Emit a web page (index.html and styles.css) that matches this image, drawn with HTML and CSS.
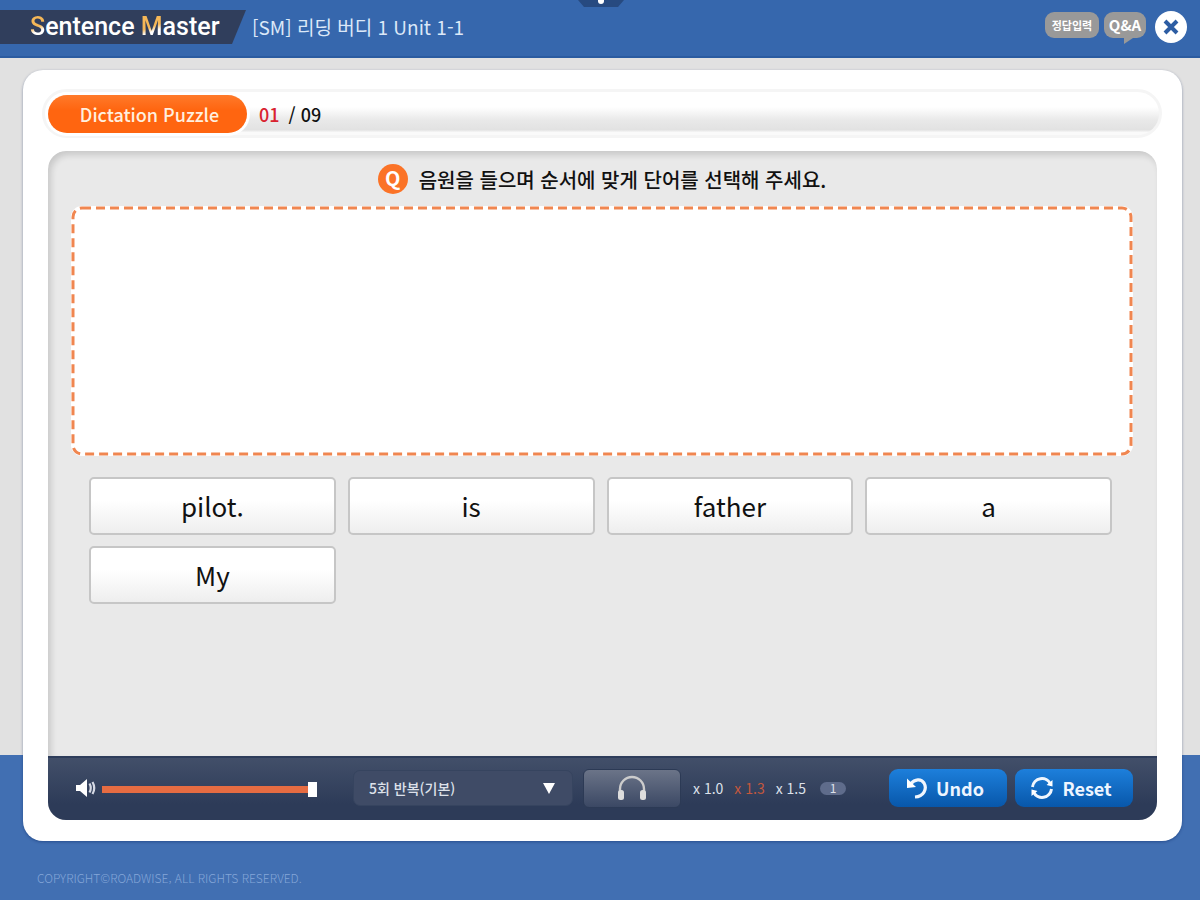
FILE: index.html
```html
<!DOCTYPE html>
<html lang="ko">
<head>
    <meta charset="UTF-8">
    <meta name="viewport" content="width=device-width, initial-scale=1.0">
    <title>Sentence Master</title>
    <link rel="stylesheet" href="styles.css">
</head>
<body>
    <header class="header">
        <h1 class="brand"><span>S</span>entence <span>M</span>aster</h1>
        <p class="unit">[SM] 리딩 버디 1 Unit 1-1</p>
        <button class="pulldown" aria-label="Menu"><i></i></button>
        <div class="header-buttons">
            <button class="tag">정답입력</button>
            <button class="tag qna">Q&amp;A</button>
            <button class="close" aria-label="Close">
                <svg width="16" height="16" viewBox="0 0 16 16"><path d="M2 2l12 12M14 2L2 14" stroke="#2d5da3" stroke-width="4"/></svg>
            </button>
        </div>
    </header>

    <main class="card">
        <div class="title-bar">
            <h2 class="title">Dictation Puzzle</h2>
            <p class="count"><span>01</span> / 09</p>
        </div>

        <section class="panel">
            <div class="puzzle">
                <p class="question"><span class="q-mark">Q</span>음원을 들으며 순서에 맞게 단어를 선택해 주세요.</p>
                <div class="answer">
                    <svg class="answer-line"><rect x="2" y="2" rx="9"/></svg>
                </div>
                <div class="words">
                    <button class="word">pilot.</button>
                    <button class="word">is</button>
                    <button class="word">father</button>
                    <button class="word">a</button>
                    <button class="word">My</button>
                </div>
            </div>

            <div class="toolbar">
                <label class="volume">
                    <svg width="20" height="18" viewBox="0 0 20 18"><path d="M0 6h4l7-6v18l-7-6H0z" fill="#fff"/><path d="M13.500 4.500q2.500 4.500 0 9M16.500 3q3.500 6 0 12" fill="none" stroke="#d5d9e4" stroke-width="2.200"/></svg>
                    <input type="range" min="0" max="100" value="100" aria-label="Volume">
                </label>
                <div class="repeat">
                    <select aria-label="반복">
                        <option>5회 반복(기본)</option>
                    </select>
                    <svg class="arrow" width="12" height="11" viewBox="0 0 12 11"><path d="M0 0h12L6 11z" fill="#fff"/></svg>
                </div>
                <button class="listen" aria-label="Listen">
                    <svg width="30" height="26" viewBox="0 0 30 26"><path d="M3 19v-5a12 12 0 0 1 24 0v5" fill="none" stroke="#ccc" stroke-width="2.400"/><rect x="1" y="15" width="6" height="10" rx="2.500" fill="#ddd"/><rect x="23" y="15" width="6" height="10" rx="2.500" fill="#ddd"/></svg>
                </button>
                <div class="speeds">
                    <button>x 1.0</button>
                    <button class="on">x 1.3</button>
                    <button>x 1.5</button>
                    <button class="times">1</button>
                </div>
                <div class="actions">
                    <button class="action">
                        <svg width="22" height="22" viewBox="0 0 22 22"><path d="M4.500 7C9 2 15 1.500 18 6C21.500 12 17.500 19.500 9 20" fill="none" stroke="#f0f6fd" stroke-width="3.200"/><path d="M1 1.500V11l9-1z" fill="#fff"/></svg>
                        Undo
                    </button>
                    <button class="action">
                        <svg width="24" height="24" viewBox="0 0 24 24"><path d="M2.500 11a9.500 9.500 0 0 1 18-3M21.500 13a9.500 9.500 0 0 1-18 3" fill="none" stroke="#f0f6fd" stroke-width="3"/><path d="M22.500 4v6.500l-6-1.500zM1.500 20v-6.500l6 1.500z" fill="#fff"/></svg>
                        Reset
                    </button>
                </div>
            </div>
        </section>
    </main>

    <footer class="footer">COPYRIGHT©ROADWISE, ALL RIGHTS RESERVED.</footer>
</body>
</html>
```
FILE: styles.css
```css
* {
    box-sizing: border-box;
}
body {
    display: flex;
    flex-direction: column;
    min-height: 100vh;
    margin: 0;
    font-family: "Noto Sans CJK KR", sans-serif;
    color: #111;
    background: linear-gradient(to top, #416fb2 145px, #e1e1e1 145px);
}
h1, h2, p {
    margin: 0;
}
button, select {
    border: none;
    padding: 0;
    font-family: inherit;
    color: inherit;
    cursor: pointer;
}

/* header */
.header {
    position: relative;
    display: flex;
    align-items: center;
    height: 58px;
    padding-bottom: 2px;
    background: #3667ad;
    border-bottom: 2px solid #2b5ba0;
}
.brand {
    width: 246px;
    height: 34px;
    padding-left: 30px;
    font-family: Roboto, sans-serif;
    font-size: 25px;
    font-weight: 500;
    line-height: 34px;
    color: #fff;
    background: #303e5c;
    clip-path: polygon(0 0, 100% 0, 232px 100%, 0 100%);
}
.brand span {
    background: linear-gradient(160deg, #f5b757 50%, #fff 65%);
    -webkit-background-clip: text;
    background-clip: text;
    color: transparent;
}
.unit {
    padding-left: 6px;
    font-size: 19px;
    line-height: 28px;
    color: #dce8f8;
}
.pulldown {
    position: absolute;
    top: 0;
    left: 50%;
    width: 46px;
    height: 7px;
    margin-left: -22px;
    background: #274a80;
    clip-path: polygon(0 0, 100% 0, 40px 100%, 6px 100%);
}
.pulldown i {
    display: block;
    width: 6px;
    height: 4px;
    margin: -3px auto 0;
    border-radius: 0 0 3px 3px;
    background: #fff;
}
.header-buttons {
    display: flex;
    gap: 5px;
    margin-left: auto;
    padding-right: 13px;
}
.tag {
    position: relative;
    width: 54px;
    height: 26px;
    margin-top: 1px;
    border-radius: 9px;
    background: #999;
    color: #fff;
    font-size: 11px;
    font-weight: 700;
    line-height: 24px;
}
.qna {
    width: 42px;
    font-size: 15px;
}
.qna::after {
    content: "";
    position: absolute;
    top: 24px;
    right: 10px;
    width: 12px;
    height: 8px;
    background: #999;
    clip-path: polygon(0 0, 100% 0, 0 100%);
}
.close {
    display: flex;
    align-items: center;
    justify-content: center;
    width: 32px;
    height: 32px;
    margin-left: 4px;
    border-radius: 50%;
    background: #fff;
}

/* card */
.card {
    display: flex;
    flex: 1;
    flex-direction: column;
    margin: 12px 18px 0 23px;
    padding: 19px 20px 21px 19px;
    border-radius: 20px;
    background: #fff;
    box-shadow: 0 1px 3px rgba(0, 30, 90, 0.4);
}
.title-bar {
    display: flex;
    align-items: center;
    height: 49px;
    padding-left: 3px;
    border: 3px solid #f5f5f5;
    border-radius: 25px;
    background: linear-gradient(#fff 35%, #e9e9e9 65%, #e2e2e2 88%, #fafafa 94%);
}
.title {
    width: 199px;
    height: 38px;
    padding-left: 4px;
    border-radius: 19px;
    background: linear-gradient(#ff7a2a, #ff6510 40%);
    box-shadow: 0 0 0 3px #fff;
    color: #ffefdf;
    font-size: 18px;
    font-weight: 500;
    line-height: 38px;
    text-align: center;
}
.count {
    padding-left: 12px;
    font-size: 18px;
    font-weight: 500;
}
.count span {
    margin-right: 4px;
    color: #d9222f;
}

/* puzzle */
.panel {
    display: flex;
    flex: 1;
    flex-direction: column;
    margin: 13px 5px 0 6px;
    border-radius: 18px;
    overflow: hidden;
    background: #e9e9e9;
}
.puzzle {
    flex: 1;
    padding: 13px 24px 20px 23px;
    border-radius: 18px 18px 0 0;
    box-shadow: inset 3px 4px 6px rgba(0, 0, 0, 0.14);
}
.question {
    display: flex;
    align-items: center;
    justify-content: center;
    gap: 11px;
    height: 30px;
    margin-bottom: 12px;
    font-size: 20px;
    font-weight: 500;
}
.q-mark {
    width: 30px;
    height: 30px;
    border-radius: 50%;
    background: #fb7327;
    color: #fff;
    font-weight: 700;
    line-height: 28px;
    text-align: center;
}
.answer {
    position: relative;
    height: 250px;
    border-radius: 11px;
    background: #fff;
}
.answer-line {
    position: absolute;
    top: 0;
    left: 0;
    width: 100%;
    height: 100%;
}
.answer-line rect {
    width: calc(100% - 4px);
    height: calc(100% - 4px);
    fill: none;
    stroke: #f08650;
    stroke-width: 3;
    stroke-dasharray: 9 5;
}
.words {
    display: grid;
    grid-template-columns: repeat(4, 1fr);
    gap: 11px 12px;
    margin: 21px 21px 0 18px;
}
.word {
    height: 58px;
    border: 2px solid #c6c6c6;
    border-radius: 5px;
    background: linear-gradient(#fff 40%, #eee);
    font-size: 26px;
    line-height: 52px;
}

/* toolbar */
.toolbar {
    display: flex;
    align-items: center;
    height: 64px;
    padding: 0 24px 2px 28px;
    border-top: 2px solid #2e3d5b;
    background: linear-gradient(#424f69, #2d3b58 75%);
    color: #dde1ea;
}
.volume {
    display: flex;
    align-items: center;
    gap: 6px;
}
.volume input {
    width: 215px;
    height: 16px;
    margin: 2px 0 0;
    appearance: none;
    background: linear-gradient(#e66c42, #e66c42) center / 100% 7px no-repeat;
}
.volume input::-webkit-slider-thumb {
    appearance: none;
    width: 9px;
    height: 15px;
    background: #fff;
}
.repeat {
    position: relative;
    margin-left: 36px;
}
.repeat select {
    width: 220px;
    height: 36px;
    padding-left: 15px;
    appearance: none;
    border: 1px solid #36445f;
    border-radius: 7px;
    background: #3f4b66;
    font-size: 14px;
    font-weight: 500;
}
.arrow {
    position: absolute;
    top: 13px;
    right: 18px;
    pointer-events: none;
}
.listen {
    display: flex;
    align-items: center;
    justify-content: center;
    width: 98px;
    height: 39px;
    margin-left: 10px;
    border: 1px solid #2c3a55;
    border-radius: 6px;
    background: linear-gradient(#6b7488, #3b4864);
}
.speeds {
    display: flex;
    align-items: center;
    gap: 11px;
    margin-left: 12px;
}
.speeds button {
    background: none;
    font-size: 14px;
}
.speeds .on {
    color: #c4583d;
}
.speeds .times {
    width: 26px;
    height: 13px;
    margin-left: 3px;
    border-radius: 7px;
    background: #5f6c8b;
    font-size: 12px;
    line-height: 12px;
}
.actions {
    display: flex;
    gap: 8px;
    margin-left: auto;
}
.action {
    display: flex;
    align-items: center;
    justify-content: center;
    gap: 8px;
    width: 118px;
    height: 38px;
    padding-right: 6px;
    border-radius: 9px;
    background: linear-gradient(#1d7fdb, #0857aa);
    color: #eef5ff;
    font-size: 18px;
    font-weight: 700;
    line-height: 32px;
}

.footer {
    height: 59px;
    padding: 27px 37px 0;
    color: #84a6d8;
    font-size: 12px;
    font-weight: 300;
    line-height: 20px;
}
```
